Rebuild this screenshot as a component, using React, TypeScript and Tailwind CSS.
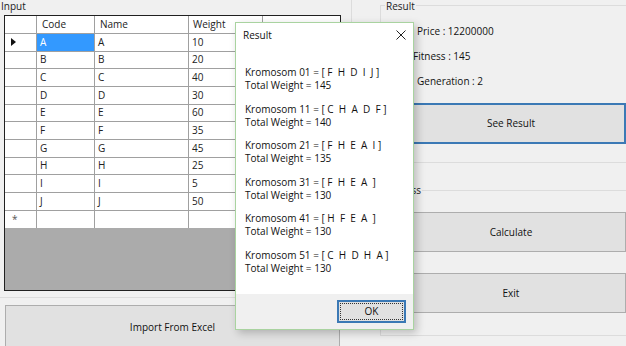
const rows = [
  ["A", "A", "10"],
  ["B", "B", "20"],
  ["C", "C", "40"],
  ["D", "D", "30"],
  ["E", "E", "60"],
  ["F", "F", "35"],
  ["G", "G", "45"],
  ["H", "H", "25"],
  ["I", "I", "5"],
  ["J", "J", "50"],
];

const results = [
  ["Kromosom 01 = [ F  H  D  I  J ]", "Total Weight = 145"],
  ["Kromosom 11 = [ C  H  A  D  F ]", "Total Weight = 140"],
  ["Kromosom 21 = [ F  H  E  A  I ]", "Total Weight = 135"],
  ["Kromosom 31 = [ F  H  E  A  ]", "Total Weight = 130"],
  ["Kromosom 41 = [ H  F  E  A  ]", "Total Weight = 130"],
  ["Kromosom 51 = [ C  H  D  H  A ]", "Total Weight = 130"],
];

const font = { fontFamily: '"Open Sans", "Noto Sans", sans-serif' };

function DataGrid() {
  return (
    <div className="ml-[4px] mt-[15px] w-[337px] h-[276px] border border-[#202020] bg-[#ababab] flex flex-col overflow-hidden">
      <div className="flex h-[18px] bg-white border-b border-[#a0a0a0] text-[10px] text-[#222] shrink-0">
        <div className="w-[32px] border-r border-[#a0a0a0]" />
        <div className="w-[58px] border-r border-[#a0a0a0] pl-[5px] leading-[17px]">Code</div>
        <div className="w-[94px] border-r border-[#a0a0a0] pl-[5px] leading-[17px]">Name</div>
        <div className="w-[74px] border-r border-[#a0a0a0] pl-[4px] leading-[17px]">Weight</div>
        <div className="flex-1" />
      </div>
      {rows.map((r, i) => (
        <div key={i} className="flex h-[17.67px] bg-white border-b border-[#a0a0a0] text-[10px] text-[#222] shrink-0">
          <div className="w-[32px] border-r border-[#a0a0a0] flex items-center pl-[6px]">
            {i === 0 && (
              <svg width="5" height="8" viewBox="0 0 5 8">
                <path d="M0 0 L5 4 L0 8 Z" fill="#111" />
              </svg>
            )}
          </div>
          <div
            className={`w-[58px] border-r border-[#a0a0a0] pl-[3px] flex items-center ${
              i === 0 ? "bg-[#3399ff] text-white" : ""
            }`}
          >
            {r[0]}
          </div>
          <div className="w-[94px] border-r border-[#a0a0a0] pl-[3px] flex items-center">{r[1]}</div>
          <div className="w-[74px] border-r border-[#a0a0a0] pl-[3px] flex items-center">{r[2]}</div>
          <div className="flex-1" />
        </div>
      ))}
      <div className="flex h-[17.67px] bg-white text-[10px] text-[#555] shrink-0">
        <div className="w-[32px] border-r border-[#a0a0a0] pl-[7px] leading-[17px]">*</div>
        <div className="w-[58px] border-r border-[#a0a0a0]" />
        <div className="w-[94px] border-r border-[#a0a0a0]" />
        <div className="w-[74px] border-r border-[#a0a0a0]" />
        <div className="flex-1" />
      </div>
    </div>
  );
}

function ResultDialog() {
  return (
    <div className="absolute left-[235px] top-[22px] w-[179px] h-[308px] bg-white border border-[#a9d3a0] shadow-[3px_3px_8px_rgba(0,0,0,0.22)] flex flex-col">
      <div className="h-[24px] flex items-center justify-between pl-[7px] pr-[7px] text-[10px] text-[#111] shrink-0">
        <span className="mt-[1px]">Result</span>
        <svg width="10" height="10" viewBox="0 0 10 10">
          <path d="M0.5 0.5 L9.5 9.5 M9.5 0.5 L0.5 9.5" stroke="#222" strokeWidth="1" />
        </svg>
      </div>
      <div className="flex-1 pl-[9px] pt-[19px] flex flex-col gap-[10.5px] text-[10px] text-[#111] leading-[13px]">
        {results.map((r, i) => (
          <div key={i} className="flex flex-col">
            <span className="whitespace-pre">{r[0]}</span>
            <span>{r[1]}</span>
          </div>
        ))}
      </div>
      <div className="h-[35px] bg-[#f0f0f0] flex items-center justify-end pr-[7px] shrink-0">
        <div className="w-[69px] h-[23px] border-2 border-[#3b79b5] bg-[#e1e1e1] p-[1px]">
          <div className="w-full h-full border border-dotted border-[#333] flex items-center justify-center text-[10px] text-[#111]">
            OK
          </div>
        </div>
      </div>
    </div>
  );
}

export default function App() {
  return (
    <div className="relative w-[626px] h-[346px] bg-[#f0f0f0] overflow-hidden flex" style={font}>
      <div className="w-[352px] flex flex-col shrink-0">
        <div className="relative h-[298px] shrink-0 border-r border-b border-[#dcdcdc]">
          <span className="absolute left-[1px] top-0 text-[10px] leading-[12px] text-[#222] bg-[#f0f0f0] pr-[2px]">Input</span>
          <DataGrid />
        </div>
        <div className="ml-[5px] mt-[7px] w-[335px] h-[45px] shrink-0 border border-[#adadad] bg-[#e1e1e1] flex items-center justify-center text-[10px] text-[#111]">
          Import From Excel
        </div>
      </div>
      <div className="ml-[28px] flex-1 flex flex-col">
        <div className="relative mt-[5px] h-[158px] border-t border-l border-b border-[#dcdcdc] pl-[36px] text-[10px] text-[#111]">
          <span className="absolute left-[4px] -top-[7px] bg-[#f0f0f0] px-[1px] text-[#222] leading-[14px]">Result</span>
          <div className="pt-[18px] flex flex-col gap-[11px] leading-[14px]">
            <span>Price : 12200000</span>
            <span className="-ml-[4px]">Fitness : 145</span>
            <span>Generation : 2</span>
          </div>
          <div className="mt-[15px] -ml-[21px] h-[41px] border-2 border-[#3b79b5] bg-[#e1e1e1] flex items-center justify-center">
            See Result
          </div>
        </div>
        <div className="relative mt-[27px] h-[146px] border-t border-l border-b border-[#dcdcdc] pl-[15px] text-[10px] text-[#111]">
          <span className="absolute left-[3px] -top-[8px] bg-[#f0f0f0] px-[1px] text-[#222]">Process</span>
          <div className="mt-[21px] h-[40px] border border-[#adadad] bg-[#e1e1e1] flex items-center justify-center">
            Calculate
          </div>
          <div className="mt-[21px] h-[40px] border border-[#adadad] bg-[#e1e1e1] flex items-center justify-center">
            Exit
          </div>
        </div>
      </div>
      <ResultDialog />
    </div>
  );
}
